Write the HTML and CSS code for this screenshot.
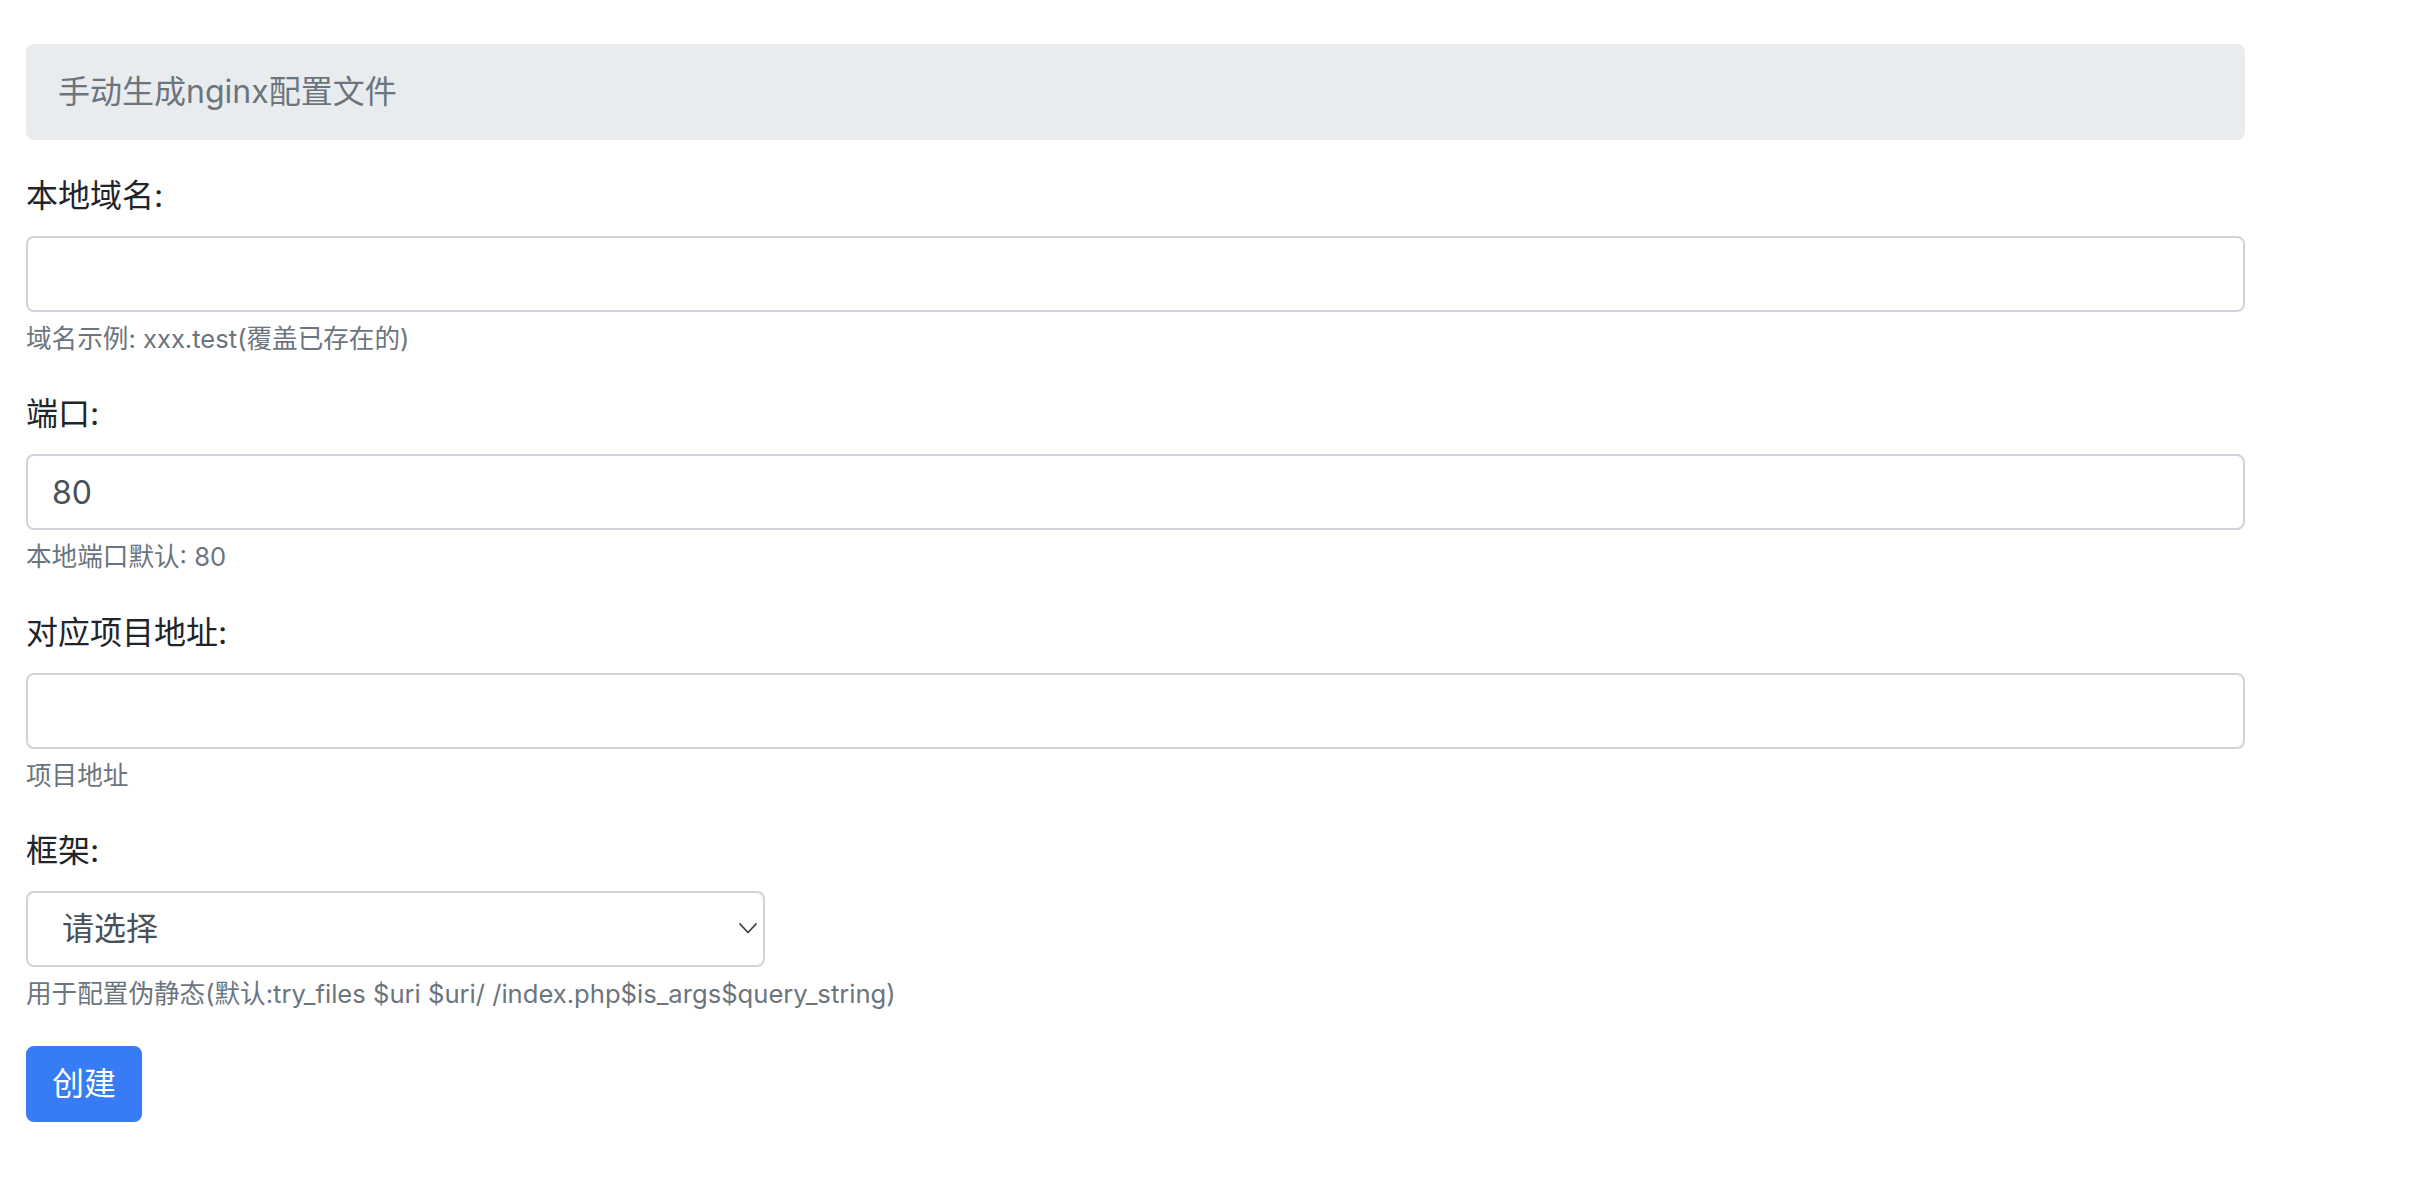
FILE: index.html
```html
<!DOCTYPE html>
<html lang="zh-CN">
<head>
<meta charset="utf-8">
<title>手动生成nginx配置文件</title>
<link rel="stylesheet" href="styles.css">
</head>
<body>
<div class="page">
  <div class="crumb">手动生成nginx配置文件</div>
  <form class="form">
    <div class="group">
      <label class="label" for="domain">本地域名:</label>
      <input class="control" id="domain" type="text">
      <small class="help">域名示例: xxx.test(覆盖已存在的)</small>
    </div>
    <div class="group">
      <label class="label" for="port">端口:</label>
      <input class="control" id="port" type="text" value="80">
      <small class="help">本地端口默认: 80</small>
    </div>
    <div class="group">
      <label class="label" for="path">对应项目地址:</label>
      <input class="control" id="path" type="text">
      <small class="help">项目地址</small>
    </div>
    <div class="group">
      <label class="label" for="framework">框架:</label>
      <div class="select-wrap">
        <select class="control select" id="framework">
          <option>请选择</option>
        </select>
        <svg class="chevron" width="18" height="11" viewBox="0 0 18 11" aria-hidden="true"><path d="M1 1 L9 9.5 L17 1" fill="none" stroke="#3a3d42" stroke-width="1.8" stroke-linecap="round" stroke-linejoin="round"/></svg>
      </div>
      <small class="help">用于配置伪静态(默认:try_files $uri $uri/ /index.php$is_args$query_string)</small>
    </div>
    <button class="btn" type="button">创建</button>
  </form>
</div>
</body>
</html>
```

FILE: styles.css
```css
* { box-sizing: border-box; }
html, body { margin: 0; padding: 0; background: #fff; }
body {
  font-family: "Inter", "Noto Sans CJK SC", sans-serif;
  font-size: 32px;
  line-height: 1.5;
  color: #212529;
}
.page {
  width: 2219px;
  margin: 44px 0 0 26px;
}
.crumb {
  background: #e9ecef;
  border-radius: 8px;
  padding: 24px 32px;
  color: #6c757d;
  margin-bottom: 32px;
  height: 96px;
}
.form { margin: 0; }
.group { margin-bottom: 32px; }
.label {
  display: inline-block;
  margin-bottom: 16px;
  font-size: 32px;
  line-height: 48px;
}
.control {
  display: block;
  width: 100%;
  height: 76px;
  padding: 12px 24px;
  font-family: "Inter", "Noto Sans CJK SC", sans-serif;
  font-size: 32px;
  line-height: 48px;
  color: #495057;
  background: #fff;
  border: 2px solid #ced4da;
  border-radius: 8px;
  outline: none;
}
.select-wrap {
  position: relative;
  width: 739px;
}
.select {
  -webkit-appearance: none;
  appearance: none;
  padding-left: 34px;
  padding-right: 56px;
}
.chevron {
  position: absolute;
  right: 8px;
  top: 32px;
}
.help {
  display: block;
  margin-top: 8px;
  font-size: 25.6px;
  line-height: 38.4px;
  color: #6c757d;
}
.btn {
  display: block;
  height: 76px;
  width: 116px;
  padding: 12px 24px;
  font-family: "Inter", "Noto Sans CJK SC", sans-serif;
  font-size: 32px;
  line-height: 48px;
  color: #fff;
  background: #377bf5;
  border: 2px solid #377bf5;
  border-radius: 8px;
}
```
